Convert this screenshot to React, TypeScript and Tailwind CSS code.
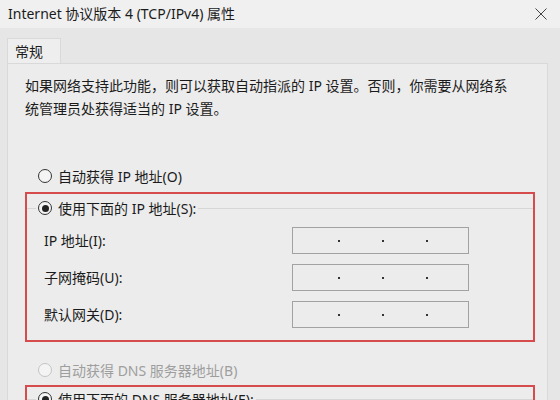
const font = { fontFamily: '"Noto Sans", "Noto Sans CJK SC", sans-serif' };

function Radio({ checked, disabled }: { checked?: boolean; disabled?: boolean }) {
  return (
    <span
      className={`flex h-[14px] w-[14px] shrink-0 items-center justify-center rounded-full border bg-[#f4f4f4] ${
        disabled ? "border-[#c4c4c4]" : "border-[#333]"
      }`}
    >
      {checked && <span className="h-[7px] w-[7px] rounded-full bg-[#222]" />}
    </span>
  );
}

function IpField() {
  return (
    <div className="flex h-[27px] w-[177px] items-center border border-[#a2a2a2] bg-[#ececec] pl-[45px]">
      <span className="h-[2px] w-[2px] bg-[#333]" />
      <span className="ml-[42px] h-[2px] w-[2px] bg-[#333]" />
      <span className="ml-[42px] h-[2px] w-[2px] bg-[#333]" />
    </div>
  );
}

function Row({ label }: { label: string }) {
  return (
    <div className="flex h-[27px] items-center">
      <span className="w-[265px] pl-[17px]">{label}</span>
      <IpField />
    </div>
  );
}

export default function App() {
  return (
    <div style={font} className="h-[400px] w-[560px] overflow-hidden bg-[#e6e6e6] text-[14px] text-[#1b1b1b]">
      <div className="flex h-[28px] items-center justify-between bg-[#f0f0f0] pl-[8px] pr-[13px]">
        <span className="leading-none">Internet 协议版本 4 (TCP/IPv4) 属性</span>
        <svg width="12" height="12" viewBox="0 0 12 12" className="text-[#444]">
          <path d="M0.5 0.5 L11.5 11.5 M11.5 0.5 L0.5 11.5" stroke="currentColor" strokeWidth="1" />
        </svg>
      </div>

      <div className="pl-[7px] pt-[10px]">
        <div className="flex h-[25px] w-[54px] items-center border border-b-0 border-[#d9d9d9] bg-[#eeeeee] pl-[7px]">
          常规
        </div>
        <div className="h-[400px] w-[541px] border border-[#d9d9d9] bg-[#ececec] pl-[17px] pt-[10px]">
          <p className="leading-[23px]">
            如果网络支持此功能，则可以获取自动指派的 IP 设置。否则，你需要从网络系
            <br />
            统管理员处获得适当的 IP 设置。
          </p>

          <div className="mt-[46px] flex h-[20px] items-center gap-[6px] pl-[13px]">
            <Radio />
            <span>自动获得 IP 地址(O)</span>
          </div>

          <div className="mt-[6px] w-[510px] border-2 border-[#d64b4b] pb-[12px]">
            <div className="mt-[4px] flex h-[20px] items-center">
              <span className="h-px w-[9px] bg-[#d6d6d6]" />
              <span className="flex items-center gap-[6px] px-[2px]">
                <Radio checked />
                <span>使用下面的 IP 地址(S):</span>
              </span>
              <span className="h-px flex-1 bg-[#d6d6d6]" />
            </div>
            <div className="mt-[9px] flex flex-col gap-[10px]">
              <Row label="IP 地址(I):" />
              <Row label="子网掩码(U):" />
              <Row label="默认网关(D):" />
            </div>
          </div>

          <div className="mt-[18px] flex h-[20px] items-center gap-[6px] pl-[13px] text-[#9e9e9e]">
            <Radio disabled />
            <span>自动获得 DNS 服务器地址(B)</span>
          </div>

          <div className="mt-[5px] w-[510px] border-2 border-[#d64b4b]">
            <div className="mt-[2px] flex h-[20px] items-center">
              <span className="h-px w-[9px] bg-[#d6d6d6]" />
              <span className="flex items-center gap-[6px] px-[2px]">
                <Radio checked />
                <span>使用下面的 DNS 服务器地址(E):</span>
              </span>
              <span className="h-px flex-1 bg-[#d6d6d6]" />
            </div>
          </div>
        </div>
      </div>
    </div>
  );
}
